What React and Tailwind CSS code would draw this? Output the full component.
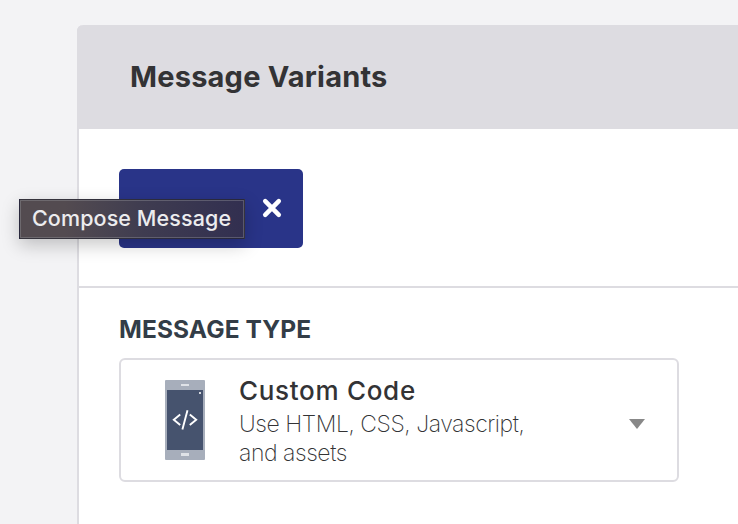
import React from "react";

function PhoneIcon() {
  return (
    <svg width="40" height="80" viewBox="0 0 40 80" className="shrink-0" fill="none">
      <rect width="40" height="80" rx="1" fill="#a7aebb" />
      <rect x="2" y="10" width="36" height="60" fill="#46536e" />
      <rect x="16" y="4" width="8" height="2" fill="#dfe2e7" />
      <rect x="16" y="73" width="8" height="3" fill="#dfe2e7" />
      <rect x="34" y="12" width="2" height="2" fill="#d3d7df" />
      <path d="M15.2 34.4 8.8 39.7 15.2 45M24.8 34.4 31.2 39.7 24.8 45M22.5 30.2 17.4 49.4" stroke="#fff" strokeWidth="1.9" />
    </svg>
  );
}

function VariantTab() {
  return (
    <div className="relative flex h-[79px] w-[184px] items-center justify-end rounded-[5px] bg-[#293488] pr-[21px]">
      <svg width="20" height="20" viewBox="0 0 20 20" className="-mt-[2px]">
        <path d="M3.2 3.2 16.8 16.8M16.8 3.2 3.2 16.8" stroke="#fff" strokeWidth="4.5" strokeLinecap="round" />
      </svg>
      <div className="absolute -left-[100px] top-[30px] flex h-[40px] w-[226px] items-center whitespace-nowrap border border-[#22232f]/60 bg-linear-to-r from-[#534b50] from-20% via-[#3f3c50] via-55% to-[#322f50] pl-[12px] shadow-[0_6px_18px_rgba(0,0,0,0.22),inset_0_0_0_1px_rgba(150,150,155,0.4)]">
        <span className="text-[21.5px] font-medium leading-none tracking-[0.1px] text-[#ececee]">Compose Message</span>
      </div>
    </div>
  );
}

function MessageTypeSelect() {
  return (
    <div className="mt-[14px] flex h-[124px] w-[560px] items-center rounded-[6px] border-2 border-[#dddce1] pl-[44px] pr-[32px]">
      <PhoneIcon />
      <div className="ml-[34px] grow whitespace-nowrap pt-[2px] text-[#333335]">
        <div className="h-[36px] text-[26px] font-medium leading-[33px] tracking-[0.7px]">Custom Code</div>
        <div className="text-[23px] font-extralight leading-[29px] tracking-[-0.45px]">
          Use HTML, CSS, Javascript,
          <br />
          and assets
        </div>
      </div>
      <svg width="16" height="10" viewBox="0 0 16 10" className="mt-[7px] shrink-0">
        <path d="M0 0H16L8 10Z" fill="#888" />
      </svg>
    </div>
  );
}

export default function App() {
  return (
    <div className="h-[524px] w-[738px] overflow-hidden bg-[#f3f3f5] pl-[77px] pt-[25px] font-[Inter,sans-serif]">
      <section className="h-[499px] rounded-tl-[6px] border-l-2 border-[#dddce1] bg-white">
        <header className="-ml-[2px] flex h-[104px] items-center rounded-tl-[6px] bg-[#dddce1] pb-[1px] pl-[53px]">
          <h1 className="whitespace-nowrap text-[29px] font-bold leading-none tracking-[0.2px] text-[#333335]">Message Variants</h1>
        </header>
        <div className="h-[159px] border-b-2 border-[#dddce1] pl-[40px] pt-[40px]">
          <VariantTab />
        </div>
        <div className="pl-[40px] pt-[26px]">
          <h2 className="h-[30px] whitespace-nowrap text-[24.5px] font-bold leading-[30px] tracking-[0.1px] text-[#333d47]">MESSAGE TYPE</h2>
          <MessageTypeSelect />
        </div>
      </section>
    </div>
  );
}
